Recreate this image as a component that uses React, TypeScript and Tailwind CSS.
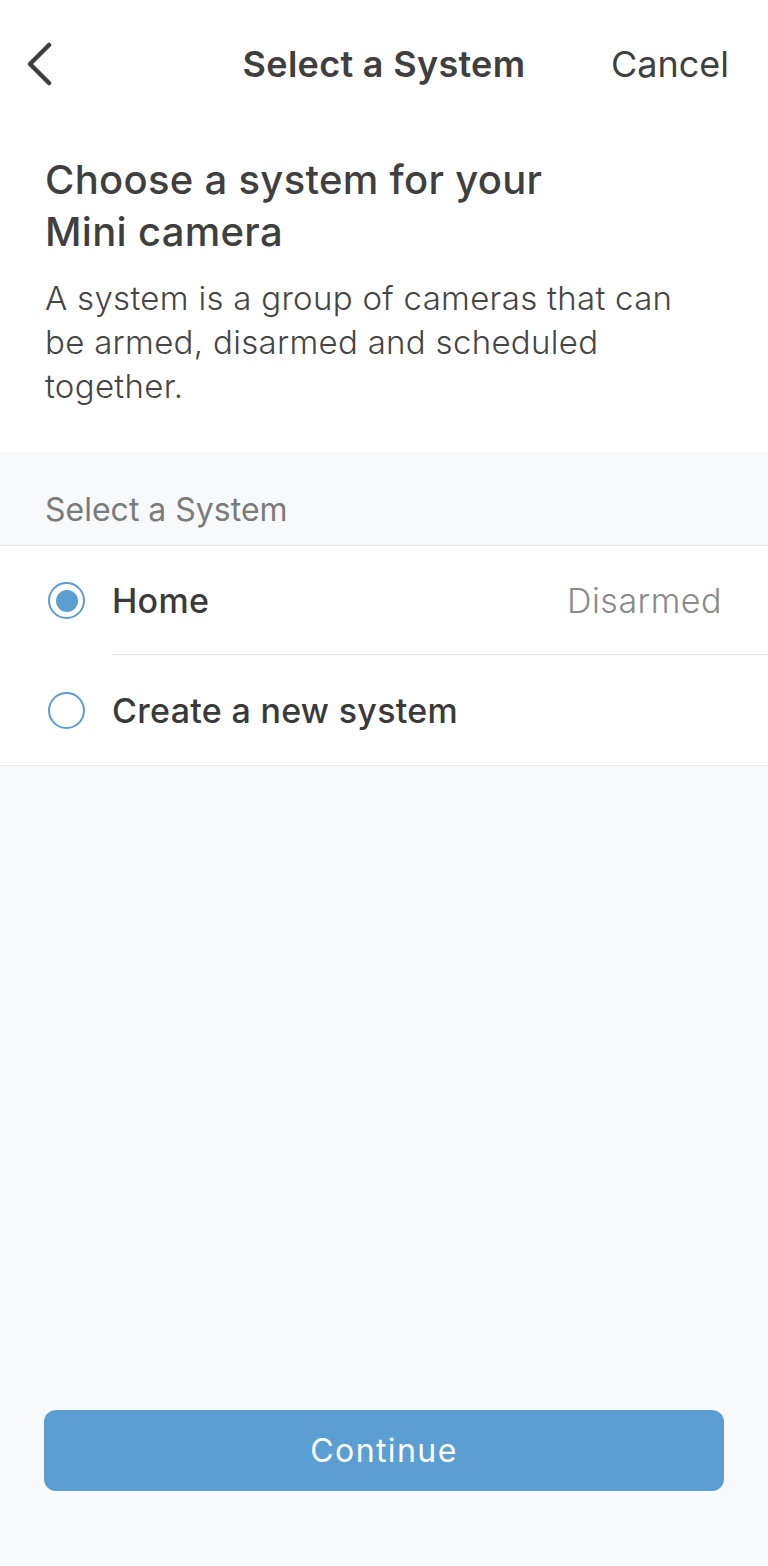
import React from "react";

const font = { fontFamily: "Inter, 'Noto Sans', sans-serif" };

function Radio({ checked }: { checked: boolean }) {
  return (
    <span className="flex h-[37px] w-[37px] shrink-0 items-center justify-center rounded-full border-2 border-[#5b9ed2] bg-white">
      {checked && <span className="h-[22px] w-[22px] rounded-full bg-[#5b9ed2]" />}
    </span>
  );
}

export default function App() {
  const systems = [
    { name: "Home", status: "Disarmed", checked: true },
    { name: "Create a new system", status: "", checked: false },
  ];

  return (
    <div style={font} className="flex min-h-[1566px] w-[768px] flex-col bg-[#f8f9fb] text-[#3f3f3f]">
      {/* Top bar + intro */}
      <div className="bg-white">
        <div className="relative flex h-[128px] items-center justify-between px-[24px]">
          <svg width="28" height="44" viewBox="0 0 28 44" fill="none" className="ml-[1px]">
            <path d="M24 3 L5 22 L24 41" stroke="#3f3f3f" strokeWidth="4.5" strokeLinecap="round" strokeLinejoin="round" />
          </svg>
          <div className="pointer-events-none absolute left-0 right-0 text-center text-[36px] font-semibold tracking-[0.3px]">
            Select a System
          </div>
          <button className="mr-[15px] text-[36px] font-normal">Cancel</button>
        </div>
        <div className="px-[45px] pb-[44px] pt-[26px]">
          <h1 className="text-[40px] font-medium leading-[52px] tracking-[0.3px]">
            Choose a system for your
            <br />
            Mini camera
          </h1>
          <p className="mr-[30px] mt-[18px] text-[33px] font-light leading-[44px] tracking-[0.3px] text-[#454545]">
            A system is a group of cameras that can be armed, disarmed and scheduled together.
          </p>
        </div>
      </div>

      {/* List */}
      <div className="px-[45px] pb-[17px] pt-[40px] text-[32px] font-normal leading-[36px] text-[#7b7b7b]">
        Select a System
      </div>
      <div className="border-y border-[#e6e6e6] bg-white">
        {systems.map((s, i) => (
          <div key={s.name} className="flex items-stretch">
            <div className="flex w-[112px] shrink-0 items-center pl-[48px]">
              <Radio checked={s.checked} />
            </div>
            <div
              className={
                "flex flex-1 items-center justify-between pr-[46px] " +
                (i === 0 ? "h-[109px] border-b border-[#e6e6e6]" : "h-[110px]")
              }
            >
              <span className="text-[34px] font-medium tracking-[0.3px] text-[#3a3a3a]">{s.name}</span>
              {s.status && (
                <span className="text-[34px] font-light tracking-[0.5px] text-[#8a8a8a]">{s.status}</span>
              )}
            </div>
          </div>
        ))}
      </div>

      <div className="flex-1" />

      <div className="px-[44px] pb-[75px]">
        <button className="flex h-[81px] w-full items-center justify-center rounded-[12px] bg-[#5b9ed2] text-[32px] font-normal tracking-[1.4px] text-white">
          Continue
        </button>
      </div>
    </div>
  );
}
